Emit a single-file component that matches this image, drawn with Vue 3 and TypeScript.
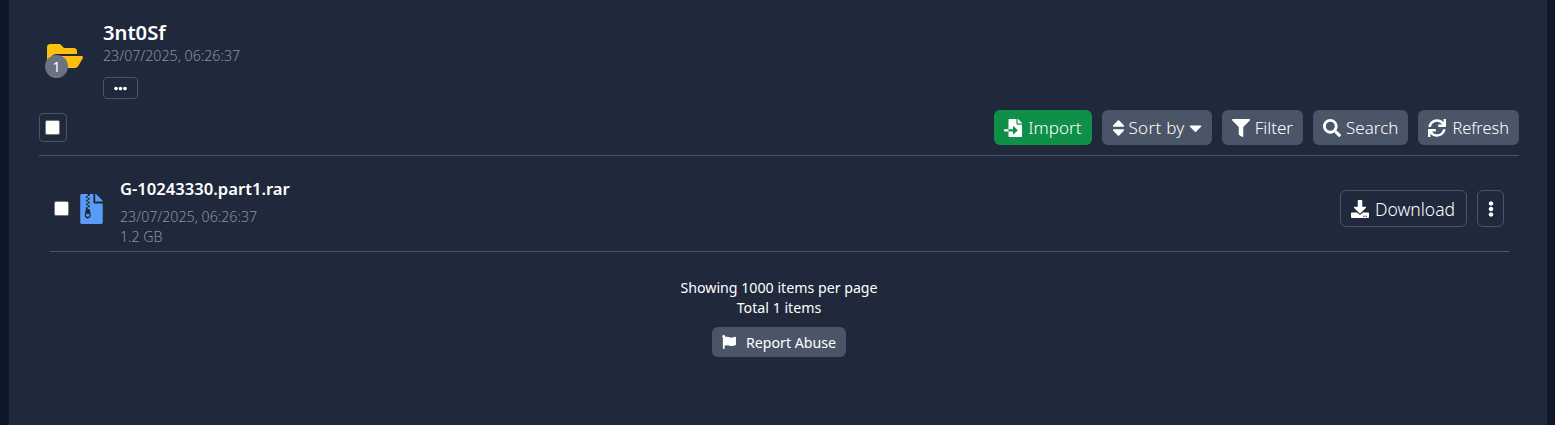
<template>
  <div class="page">
    <div class="content">
      <!-- folder header -->
      <div class="folder-head">
        <div class="folder-icon">
          <svg class="folder-svg" viewBox="0 0 576 512">
            <path fill="#fbbf0f" :d="icons.folderOpen" />
          </svg>
          <span class="badge">1</span>
        </div>
        <div class="folder-info">
          <div class="folder-name">3nt0Sf</div>
          <div class="muted head-date">23/07/2025, 06:26:37</div>
          <button class="more-btn">
            <svg class="more-svg" viewBox="0 0 512 512"><path fill="#fff" :d="icons.ellipsisH" /></svg>
          </button>
        </div>
      </div>

      <!-- toolbar -->
      <div class="toolbar">
        <label class="select-all"><span class="check"></span></label>
        <div class="actions">
          <button class="btn green">
            <svg class="ico" viewBox="0 0 512 512"><path :d="icons.fileImport" /></svg>
            Import
          </button>
          <button v-for="b in toolButtons" :key="b.label" :class="['btn', b.cls]">
            <svg :class="b.caret ? 'ico tall' : 'ico'" :viewBox="b.box"><path :d="b.path" /></svg>
            {{ b.label }}
            <svg v-if="b.caret" class="caret" viewBox="0 0 320 512"><path :d="icons.caretDown" /></svg>
          </button>
        </div>
      </div>

      <!-- file list -->
      <div class="file-row">
        <span class="check"></span>
        <svg class="file-svg" viewBox="0 0 384 512"><path fill="#5b9bf8" :d="icons.fileArchive" /></svg>
        <div class="file-info">
          <div class="file-name">G-10243330.part1.rar</div>
          <div class="muted file-date">23/07/2025, 06:26:37</div>
          <div class="muted file-size">1.2 GB</div>
        </div>
        <div class="file-actions">
          <button class="outline">
            <svg class="ico" viewBox="0 0 512 512"><path :d="icons.download" /></svg>
            Download
          </button>
          <button class="outline dots">
            <svg class="dots-svg" viewBox="0 0 192 512"><path :d="icons.ellipsisV" /></svg>
          </button>
        </div>
      </div>

      <div class="footer">
        <div>Showing 1000 items per page</div>
        <div>Total 1 items</div>
        <button class="report">
          <svg class="flag" viewBox="0 0 512 512"><path :d="icons.flag" /></svg>
          Report Abuse
        </button>
      </div>
    </div>
  </div>
</template>

<script setup lang="ts">
const icons = {
  folderOpen:
    'M572.694 292.093L500.27 416.248A63.997 63.997 0 0 1 444.989 448H45.025c-18.523 0-30.064-20.093-20.731-36.093l72.424-124.155A64 64 0 0 1 152 256h399.964c18.523 0 30.064 20.093 20.73 36.093zM152 224h328v-48c0-26.51-21.49-48-48-48H272l-64-64H48C21.49 64 0 85.49 0 112v278.046l69.077-118.418C86.214 242.25 117.989 224 152 224z',
  ellipsisH:
    'M328 256c0 39.8-32.2 72-72 72s-72-32.2-72-72 32.2-72 72-72 72 32.2 72 72zm104-72c-39.8 0-72 32.2-72 72s32.2 72 72 72 72-32.2 72-72-32.2-72-72-72zm-352 0c-39.8 0-72 32.2-72 72s32.2 72 72 72 72-32.2 72-72-32.2-72-72-72z',
  ellipsisV:
    'M96 184c39.8 0 72 32.2 72 72s-32.2 72-72 72-72-32.2-72-72 32.2-72 72-72zM24 80c0 39.8 32.2 72 72 72s72-32.2 72-72S135.8 8 96 8 24 40.2 24 80zm0 352c0 39.8 32.2 72 72 72s72-32.2 72-72-32.2-72-72-72-72 32.2-72 72z',
  fileImport:
    'M16 288c-8.8 0-16 7.2-16 16v32c0 8.8 7.2 16 16 16h112v-64zm489-183L407.1 7c-4.5-4.5-10.6-7-17-7H384v128h128v-6.1c0-6.3-2.5-12.4-7-16.9zm-153 31V0H152c-13.3 0-24 10.7-24 24v264h128v-65.2c0-14.3 17.3-21.4 27.4-11.3L379 308c6.6 6.7 6.6 17.4 0 24l-95.7 96.4c-10.1 10.1-27.4 3-27.4-11.3V352H128v136c0 13.3 10.7 24 24 24h336c13.3 0 24-10.7 24-24V160H376c-13.2 0-24-10.8-24-24z',
  sort: 'M41 288h238c21.4 0 32.1 25.9 17 41L177 448c-9.4 9.4-24.6 9.4-33.9 0L24 329c-15.1-15.1-4.4-41 17-41zm255-105L177 64c-9.4-9.4-24.6-9.4-33.9 0L24 183c-15.1 15.1-4.4 41 17 41h238c21.4 0 32.1-25.9 17-41z',
  caretDown:
    'M31.3 192h257.3c17.8 0 26.7 21.5 14.1 34.1L174.1 354.8c-7.8 7.8-20.5 7.8-28.3 0L17.2 226.1C4.6 213.5 13.5 192 31.3 192z',
  filter:
    'M487.976 0H24.028C2.71 0-8.047 25.866 7.058 40.971L192 225.941V432c0 7.831 3.821 15.17 10.237 19.662l80 55.98C298.02 518.69 320 507.493 320 487.98V225.941l184.947-184.97C520.021 25.896 509.338 0 487.976 0z',
  search:
    'M505 442.7L405.3 343c-4.5-4.5-10.6-7-17-7H372c27.6-35.3 44-79.7 44-128C416 93.1 322.9 0 208 0S0 93.1 0 208s93.1 208 208 208c48.3 0 92.7-16.4 128-44v16.3c0 6.4 2.5 12.5 7 17l99.7 99.7c9.4 9.4 24.6 9.4 33.9 0l28.3-28.3c9.4-9.4 9.4-24.6.1-34zM208 336c-70.7 0-128-57.2-128-128 0-70.7 57.2-128 128-128 70.7 0 128 57.2 128 128 0 70.7-57.2 128-128 128z',
  sync: 'M440.65 12.57l4 82.77A247.16 247.16 0 0 0 255.83 8C134.73 8 33.91 94.92 12.29 209.82A12 12 0 0 0 24.09 224h49.05a12 12 0 0 0 11.67-9.26 175.91 175.91 0 0 1 317-56.94l-101.46-4.86a12 12 0 0 0-12.57 12v47.41a12 12 0 0 0 12 12H500a12 12 0 0 0 12-12V12a12 12 0 0 0-12-12h-47.37a12 12 0 0 0-11.98 12.57zM255.83 432a175.61 175.61 0 0 1-146-77.8l101.8 4.87a12 12 0 0 0 12.57-12v-47.4a12 12 0 0 0-12-12H12a12 12 0 0 0-12 12V500a12 12 0 0 0 12 12h47.35a12 12 0 0 0 12-12.6l-4.15-82.57A247.17 247.17 0 0 0 255.83 504c121.11 0 221.93-86.92 243.55-201.82a12 12 0 0 0-11.8-14.18h-49.05a12 12 0 0 0-11.67 9.26A175.86 175.86 0 0 1 255.83 432z',
  fileArchive:
    'M377 105L279.1 7c-4.5-4.5-10.6-7-17-7H256v128h128v-6.1c0-6.3-2.5-12.4-7-16.9zM128.4 336c-17.9 0-32.4 12.1-32.4 27 0 15 14.6 27 32.5 27s32.4-12.1 32.4-27-14.6-27-32.5-27zM224 136V0h-63.6v32h-32V0H24C10.7 0 0 10.7 0 24v464c0 13.3 10.7 24 24 24h336c13.3 0 24-10.7 24-24V160H248c-13.2 0-24-10.8-24-24zM95.9 32h32v32h-32zm32.3 384c-33.2 0-58-30.4-51.4-62.9L96.4 256v-32h32v-32h-32v-32h32v-32h-32V96h32V64h32v32h-32v32h32v32h-32v32h32v32h-32v32h22.1c5.7 0 10.7 4.1 11.8 9.7l17.3 87.7c6.4 32.4-18.4 62.6-51.5 62.6z',
  download:
    'M216 0h80c13.3 0 24 10.7 24 24v168h87.7c17.8 0 26.7 21.5 14.1 34.1L269.7 378.3c-7.5 7.5-19.8 7.5-27.3 0L90.1 226.1c-12.6-12.6-3.7-34.1 14.1-34.1H192V24c0-13.3 10.7-24 24-24zm296 376v112c0 13.3-10.7 24-24 24H24c-13.3 0-24-10.7-24-24V376c0-13.3 10.7-24 24-24h146.7l49 49c20.1 20.1 52.5 20.1 72.6 0l49-49H488c13.3 0 24 10.7 24 24zm-124 88c0-11-9-20-20-20s-20 9-20 20 9 20 20 20 20-9 20-20zm64 0c0-11-9-20-20-20s-20 9-20 20 9 20 20 20 20-9 20-20z',
  flag: 'M349.565 98.783C295.978 98.783 251.721 64 184.348 64c-24.955 0-47.309 4.384-68.045 12.013a55.947 55.947 0 0 0 3.586-23.562C118.117 24.015 94.806 1.206 66.338.048 34.345-1.254 8 24.296 8 56c0 19.026 9.497 35.825 24 45.945V488c0 13.255 10.745 24 24 24h16c13.255 0 24-10.745 24-24v-94.4c28.311-12.064 63.582-22.122 114.435-22.122 53.588 0 97.844 34.783 165.217 34.783 48.169 0 86.667-16.294 122.505-40.858C506.84 359.452 512 349.571 512 339.045v-243.1c0-23.393-24.269-38.87-45.485-29.016-34.338 15.948-76.454 31.854-116.95 31.854z'
}

const toolButtons = [
  { label: 'Sort by', path: icons.sort, box: '0 0 320 512', caret: true, cls: 'sort' },
  { label: 'Filter', path: icons.filter, box: '0 0 512 512', caret: false, cls: '' },
  { label: 'Search', path: icons.search, box: '0 0 512 512', caret: false, cls: '' },
  { label: 'Refresh', path: icons.sync, box: '0 0 512 512', caret: false, cls: 'narrow' }
]
</script>

<style>
html,
body {
  margin: 0;
  background: #0f172a;
}
</style>

<style scoped>
.page {
  height: 425px;
  overflow: hidden;
  padding: 0 8px 0 9px;
  background: #0f172a;
  font-family: "Noto Sans", "Open Sans", sans-serif;
  color: #fff;
}

.content {
  height: 425px;
  background: #1f293b;
  padding: 20px 28px 0 30px;
  box-sizing: border-box;
}

.folder-head {
  display: flex;
  height: 90px;
}

.folder-icon {
  position: relative;
  width: 64px;
  padding-left: 8px;
  box-sizing: border-box;
}

.folder-svg {
  display: block;
  width: 36px;
  height: 32px;
  margin-top: 20px;
}

.badge {
  position: absolute;
  left: 6px;
  top: 35px;
  width: 23px;
  height: 23px;
  border-radius: 50%;
  background: #6b7280;
  font-size: 14px;
  line-height: 23px;
  text-align: center;
}

.folder-name {
  font-size: 20.2px;
  font-weight: 600;
  line-height: 24px;
}

.muted {
  color: #8a92a0;
  font-size: 14.2px;
  font-weight: 300;
  line-height: 20px;
}

.head-date {
  margin-top: 2px;
}

.more-btn {
  display: flex;
  align-items: center;
  justify-content: center;
  width: 35px;
  height: 22px;
  margin-top: 11px;
  padding: 0;
  background: transparent;
  border: 1px solid #4a5568;
  border-radius: 4px;
}

.more-svg {
  width: 13px;
  height: 13px;
}

.toolbar {
  display: flex;
  align-items: center;
  justify-content: space-between;
  height: 35px;
  padding-bottom: 10px;
  border-bottom: 1px solid #4a5568;
}

.select-all {
  display: flex;
  align-items: center;
  justify-content: center;
  width: 28px;
  height: 29px;
  box-sizing: border-box;
  padding-right: 1px;
  border: 1px solid #4a5568;
  border-radius: 4px;
}

.check {
  display: block;
  flex: none;
  width: 13px;
  height: 13px;
  background: #fff;
  border: 1px solid #767676;
  border-radius: 2px;
}

.actions {
  display: flex;
  gap: 10px;
}

.btn {
  display: flex;
  align-items: center;
  gap: 5px;
  height: 35px;
  padding: 0 10px;
  border: none;
  border-radius: 6px;
  background: #4a5568;
  color: #fff;
  font-family: inherit;
  font-size: 17px;
  font-weight: 300;
}

.btn.green {
  gap: 6px;
  background: #0e9049;
}

.btn.sort {
  gap: 4px;
  letter-spacing: 0.3px;
}

.btn.narrow {
  gap: 6px;
  font-size: 16.4px;
}

.ico {
  width: 18px;
  height: 18px;
  fill: #fff;
}

.ico.tall {
  width: 13px;
  height: 20px;
}

.caret {
  width: 13px;
  height: 20px;
  fill: #fff;
}

.file-row {
  display: flex;
  align-items: center;
  height: 85px;
  margin: 0 10px 0 11px;
  padding: 10px 5px 0 4px;
  border-bottom: 1px solid #4a5568;
}

.file-svg {
  width: 23px;
  height: 30px;
  margin-left: 11px;
  flex: none;
}

.file-info {
  margin: 7px 0 0 17px;
  flex: 1;
}

.file-name {
  font-size: 16.6px;
  font-weight: 600;
  line-height: 24px;
  margin-bottom: 6px;
}

.file-actions {
  display: flex;
  gap: 10px;
}

.outline {
  display: flex;
  align-items: center;
  gap: 6px;
  height: 37px;
  padding: 0 11px 0 10px;
  background: transparent;
  border: 1px solid #4a5568;
  border-radius: 6px;
  color: #fff;
  font-family: inherit;
  font-size: 17.5px;
  font-weight: 300;
}

.dots {
  width: 27px;
  padding: 0;
  justify-content: center;
}

.dots-svg {
  width: 6px;
  height: 16px;
  fill: #fff;
}

.footer {
  display: flex;
  flex-direction: column;
  align-items: center;
  padding-top: 26px;
  font-size: 14.2px;
  line-height: 20px;
}

.report {
  display: flex;
  align-items: center;
  gap: 10px;
  height: 30px;
  margin-top: 9px;
  padding: 0 10px;
  background: #4a5568;
  border: none;
  border-radius: 6px;
  color: #fff;
  font-family: inherit;
  font-size: 14.2px;
}

.flag {
  width: 14px;
  height: 14px;
  fill: #fff;
}
</style>
